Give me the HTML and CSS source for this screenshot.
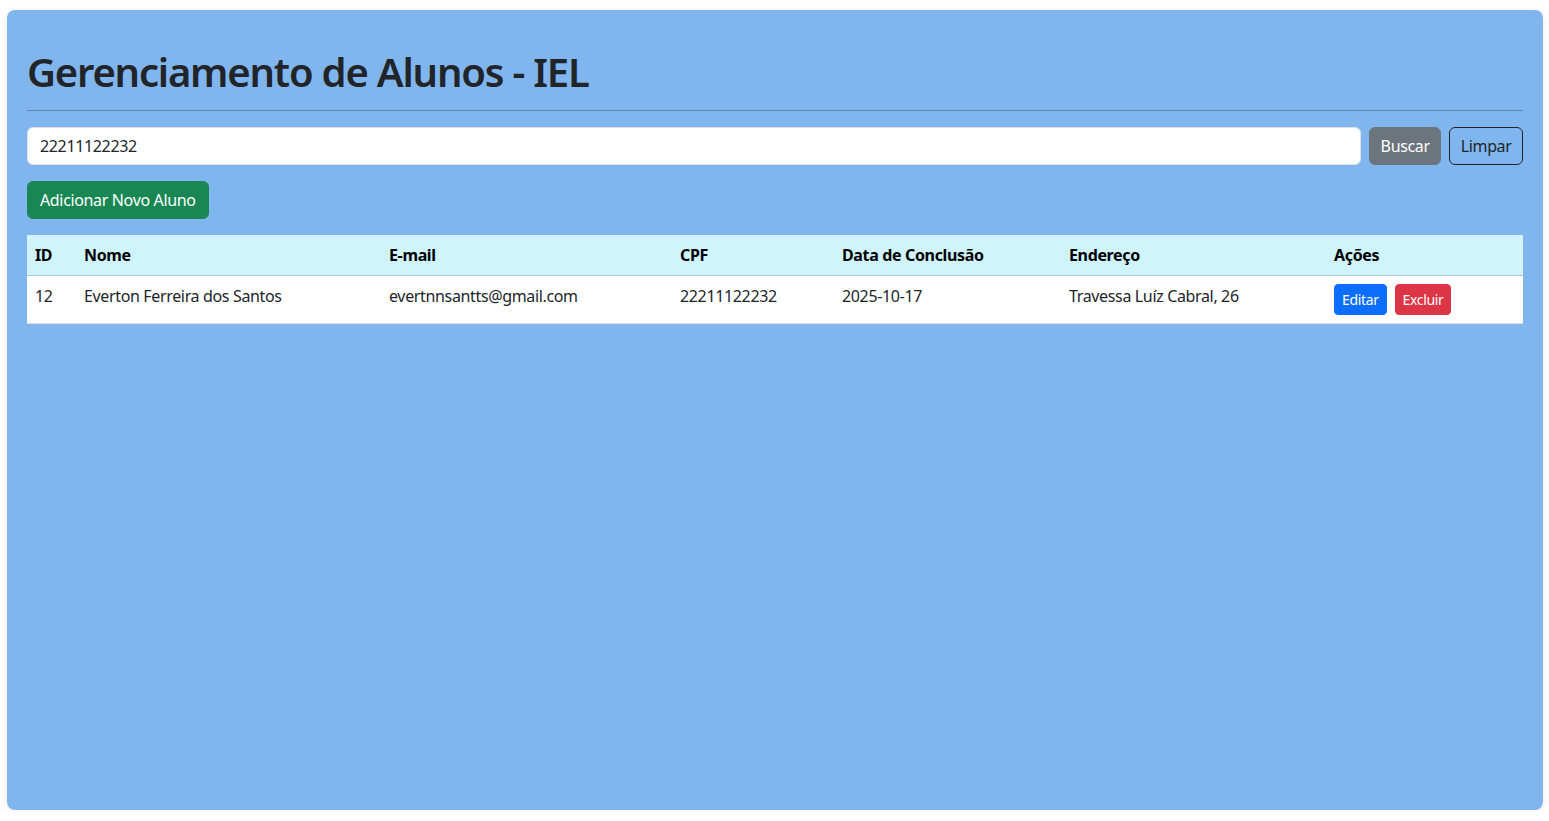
FILE: index.html
```html
<!DOCTYPE html>
<html lang="pt-BR">
<head>
<meta charset="utf-8">
<title>Gerenciamento de Alunos - IEL</title>
<link rel="stylesheet" href="styles.css">
</head>
<body>
<div class="panel">
  <h1 class="title">Gerenciamento de Alunos - IEL</h1>
  <hr class="rule">
  <form class="search">
    <input class="search-input" type="text" value="22211122232">
    <button type="button" class="btn search-btn btn-secondary">Buscar</button>
    <button type="button" class="btn search-btn btn-outline-dark">Limpar</button>
  </form>
  <button type="button" class="btn btn-success add-btn">Adicionar Novo Aluno</button>
  <table class="table">
    <colgroup>
      <col class="c-id"><col class="c-nome"><col class="c-email"><col class="c-cpf"><col class="c-data"><col class="c-end"><col class="c-acoes">
    </colgroup>
    <thead>
      <tr>
        <th>ID</th><th>Nome</th><th>E-mail</th><th>CPF</th><th>Data de Conclusão</th><th>Endereço</th><th>Ações</th>
      </tr>
    </thead>
    <tbody>
      <tr>
        <td>12</td>
        <td>Everton Ferreira dos Santos</td>
        <td>evertnnsantts@gmail.com</td>
        <td>22211122232</td>
        <td>2025-10-17</td>
        <td>Travessa Luíz Cabral, 26</td>
        <td class="actions"><button type="button" class="btn-sm btn-primary">Editar</button><button type="button" class="btn-sm btn-danger">Excluir</button></td>
      </tr>
    </tbody>
  </table>
</div>
</body>
</html>
```
FILE: styles.css
```css
* { box-sizing: border-box; }
html, body { margin: 0; padding: 0; background: #fff; }
body {
  font-family: "Noto Sans", "Open Sans", sans-serif;
  font-size: 16px;
  line-height: 1.5;
  letter-spacing: -0.35px;
  color: #212529;
}
.panel {
  margin: 10px 0 0 7px;
  width: 1536px;
  height: 800px;
  background: #80b5ee;
  border-radius: 8px;
  padding: 20px;
  box-shadow: 0 2px 8px rgba(0,0,0,0.08);
}
.title {
  margin: 18px 0 8px;
  font-size: 40px;
  line-height: 1.2;
  font-weight: 600;
  letter-spacing: -1.2px;
  color: #212529;
}
.rule {
  margin: 14px 0 16px;
  border: 0;
  border-top: 1px solid #4a6c8f;
  opacity: 0.6;
}
.search {
  display: flex;
  gap: 8px;
  margin: 0 0 16px;
}
.search-input {
  flex: 1;
  height: 38px;
  border: 1px solid #dee2e6;
  border-radius: 6px;
  padding: 6px 12px;
  font: inherit;
  letter-spacing: -0.35px;
  color: #212529;
  background: #fff;
}
.btn {
  height: 38px;
  padding: 6px 12px;
  border-radius: 6px;
  font: inherit;
  letter-spacing: -0.35px;
  border: 1px solid transparent;
  cursor: pointer;
}
.search-btn { padding: 6px 10.5px; }
.btn-secondary { background: #6c757d; border-color: #6c757d; color: #fff; }
.btn-outline-dark { background: transparent; border-color: #212529; color: #212529; }
.btn-success { background: #198754; border-color: #198754; color: #fff; }
.add-btn { display: block; margin-bottom: 16px; }
.table {
  width: 100%;
  border-collapse: collapse;
  table-layout: fixed;
  background: #fff;
}
.c-id { width: 49px; }
.c-nome { width: 305px; }
.c-email { width: 291px; }
.c-cpf { width: 162px; }
.c-data { width: 227px; }
.c-end { width: 265px; }
.c-acoes { width: 197px; }
.table th, .table td {
  padding: 8px;
  text-align: left;
  vertical-align: top;
  border-bottom: 1px solid #dee2e6;
}
.table thead th {
  background: #cff4fc;
  color: #000;
  font-weight: 700;
  border-bottom: 1px solid #a6cdd8;
}
.table tbody td { color: #212529; }
.actions { white-space: nowrap; }
.btn-sm {
  height: 31px;
  padding: 4px 7px;
  font: inherit;
  font-size: 14px;
  letter-spacing: -0.35px;
  border-radius: 4px;
  border: 1px solid transparent;
  color: #fff;
  margin-right: 8px;
  cursor: pointer;
}
.btn-primary { background: #0d6efd; border-color: #0d6efd; }
.btn-danger { background: #dc3545; border-color: #dc3545; }
```
